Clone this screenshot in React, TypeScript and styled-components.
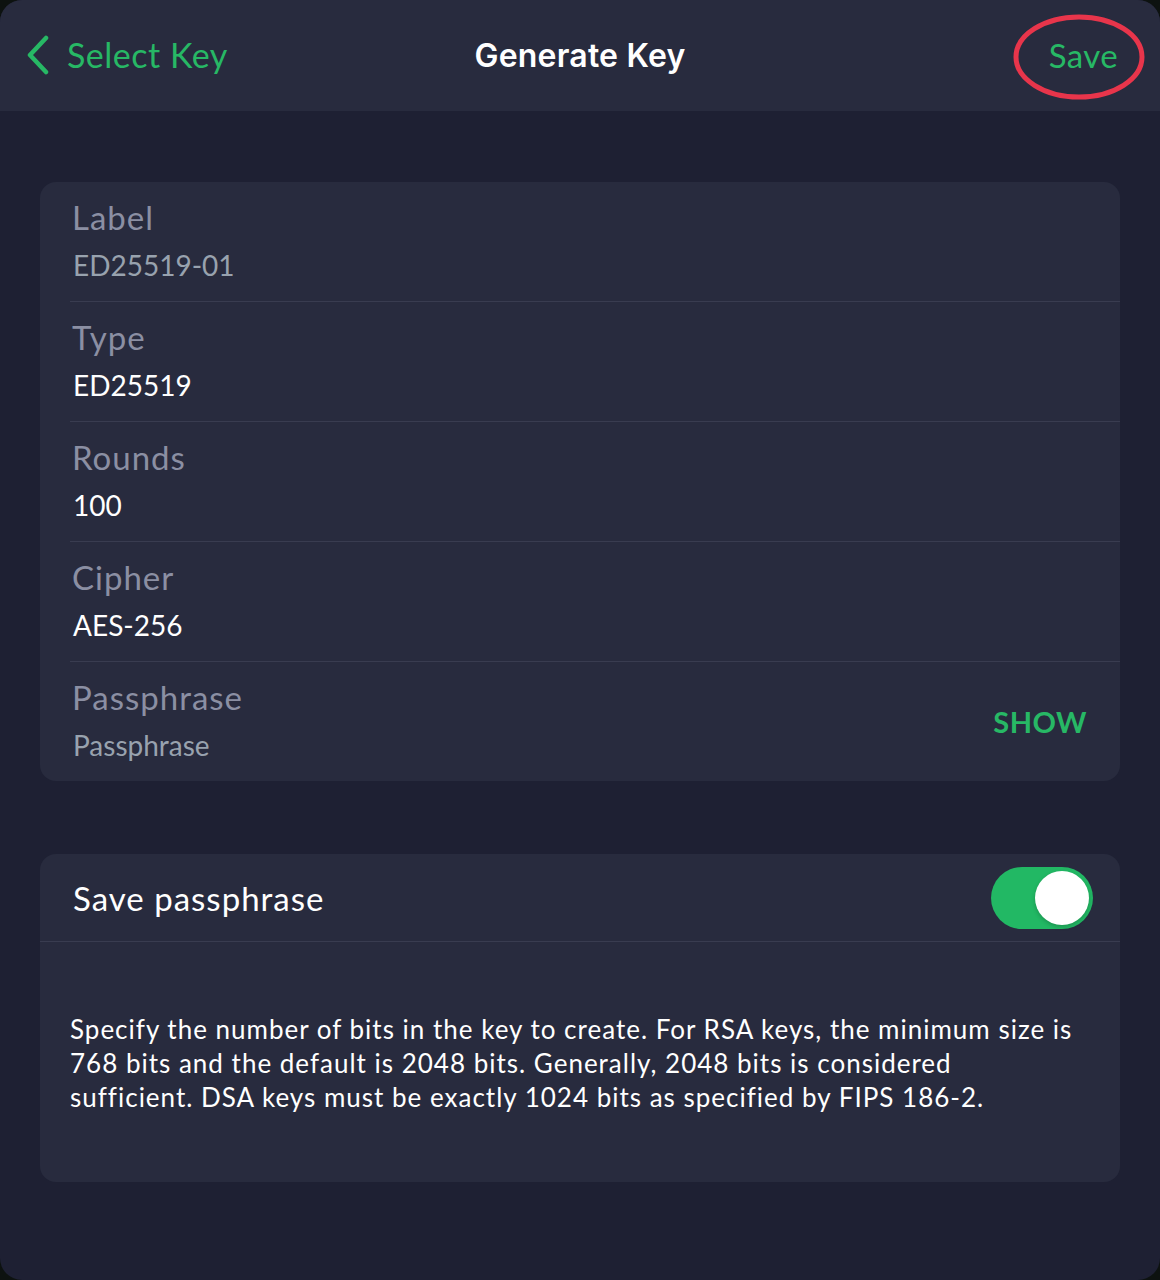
import React, { useState } from "react";
import styled, { createGlobalStyle } from "styled-components";

const GlobalStyle = createGlobalStyle`
  html, body {
    margin: 0;
    padding: 0;
    background: #0d1210;
  }
  * {
    box-sizing: border-box;
  }
`;

const green = "#27b865";

const Frame = styled.div`
  width: 1160px;
  height: 1280px;
  background: #1e2033;
  border-radius: 22px;
  overflow: hidden;
  font-family: Lato, "Noto Sans", sans-serif;
`;

const NavBar = styled.div`
  height: 111px;
  background: #282b3e;
  display: grid;
  grid-template-columns: 1fr auto 1fr;
  align-items: center;
  padding: 0 26px 0 26px;
`;

const BackButton = styled.div`
  display: flex;
  align-items: center;
  gap: 17px;
  color: ${green};
  font-size: 34px;
  letter-spacing: 0.5px;
  padding-bottom: 2px;
`;

const Title = styled.div`
  color: #ffffff;
  font-family: Inter, sans-serif;
  font-weight: 600;
  font-size: 32px;
  letter-spacing: 0.2px;
`;

const SaveWrap = styled.div`
  justify-self: end;
  position: relative;
  color: ${green};
  font-size: 33px;
  letter-spacing: 0.4px;
  padding: 0 16px 2px 0;
`;

const Ring = styled.svg`
  position: absolute;
  left: -36px;
  top: -20px;
  overflow: visible;
  pointer-events: none;
`;

const Content = styled.div`
  padding: 71px 40px 0 40px;
  display: flex;
  flex-direction: column;
  gap: 73px;
`;

const Card = styled.div`
  background: #282b3e;
  border-radius: 16px;
  overflow: hidden;
`;

const FieldRow = styled.div<{ $last?: boolean }>`
  height: ${(p) => (p.$last ? 119 : 120)}px;
  margin-left: 30px;
  padding: 16px 33px 0 2px;
  border-bottom: ${(p) => (p.$last ? "none" : "1px solid #393c50")};
  display: flex;
  align-items: center;
`;

const FieldText = styled.div`
  flex: 1;
  align-self: flex-start;
  display: flex;
  flex-direction: column;
  gap: 12px;
`;

const FieldLabel = styled.div`
  color: #8b8fa3;
  font-size: 33px;
  letter-spacing: 1px;
  line-height: 38px;
`;

const FieldValue = styled.div<{ $muted?: boolean }>`
  color: ${(p) => (p.$muted ? "#98a2ae" : "#ffffff")};
  font-size: 28px;
  line-height: 34px;
  margin-left: 1px;
`;

const ShowButton = styled.div`
  color: ${green};
  font-size: 29px;
  font-weight: 700;
  letter-spacing: 0.5px;
  margin-top: -16px;
`;

const ToggleRow = styled.div`
  height: 88px;
  border-bottom: 1px solid #393c50;
  display: flex;
  align-items: center;
  justify-content: space-between;
  padding: 0 27px 0 33px;
  color: #ffffff;
  font-size: 33px;
  letter-spacing: 1px;
`;

const Switch = styled.button<{ $on: boolean }>`
  width: 102px;
  height: 62px;
  border: none;
  padding: 0;
  border-radius: 31px;
  background: ${(p) => (p.$on ? "#22b864" : "#4a4d60")};
  position: relative;
  cursor: pointer;
`;

const Knob = styled.span<{ $on: boolean }>`
  position: absolute;
  top: 4px;
  left: ${(p) => (p.$on ? 44 : 4)}px;
  width: 54px;
  height: 54px;
  border-radius: 50%;
  background: #ffffff;
  box-shadow: 0 2px 4px rgba(0, 0, 0, 0.2);
`;

const Description = styled.p`
  margin: 0;
  padding: 70px 30px 70px 30px;
  color: #ffffff;
  font-size: 26px;
  letter-spacing: 1px;
  line-height: 34px;
  height: 240px;
`;

const fields = [
  { label: "Label", value: "ED25519-01", muted: true },
  { label: "Type", value: "ED25519" },
  { label: "Rounds", value: "100" },
  { label: "Cipher", value: "AES-256" },
];

export default function App() {
  const [savePass, setSavePass] = useState(true);

  return (
    <>
      <GlobalStyle />
      <Frame>
        <NavBar>
          <BackButton>
            <svg width="24" height="40" viewBox="0 0 24 40">
              <path
                d="M20 3 L4 20 L20 37"
                fill="none"
                stroke={green}
                strokeWidth="4.5"
                strokeLinecap="round"
                strokeLinejoin="round"
              />
            </svg>
            Select Key
          </BackButton>
          <Title>Generate Key</Title>
          <SaveWrap>
            Save
            <Ring width="132" height="84" viewBox="0 0 132 84">
              <ellipse
                cx="66"
                cy="42"
                rx="63"
                ry="40"
                fill="none"
                stroke="#e8354b"
                strokeWidth="5"
              />
            </Ring>
          </SaveWrap>
        </NavBar>

        <Content>
          <Card>
            {fields.map((f) => (
              <FieldRow key={f.label}>
                <FieldText>
                  <FieldLabel>{f.label}</FieldLabel>
                  <FieldValue $muted={f.muted}>{f.value}</FieldValue>
                </FieldText>
              </FieldRow>
            ))}
            <FieldRow $last>
              <FieldText>
                <FieldLabel>Passphrase</FieldLabel>
                <FieldValue $muted>Passphrase</FieldValue>
              </FieldText>
              <ShowButton>SHOW</ShowButton>
            </FieldRow>
          </Card>

          <Card>
            <ToggleRow>
              Save passphrase
              <Switch $on={savePass} onClick={() => setSavePass(!savePass)}>
                <Knob $on={savePass} />
              </Switch>
            </ToggleRow>
            <Description>
              Specify the number of bits in the key to create. For RSA keys, the
              minimum size is
              <br />
              768 bits and the default is 2048 bits. Generally, 2048 bits is
              considered
              <br />
              sufficient. DSA keys must be exactly 1024 bits as specified by
              FIPS 186-2.
            </Description>
          </Card>
        </Content>
      </Frame>
    </>
  );
}
